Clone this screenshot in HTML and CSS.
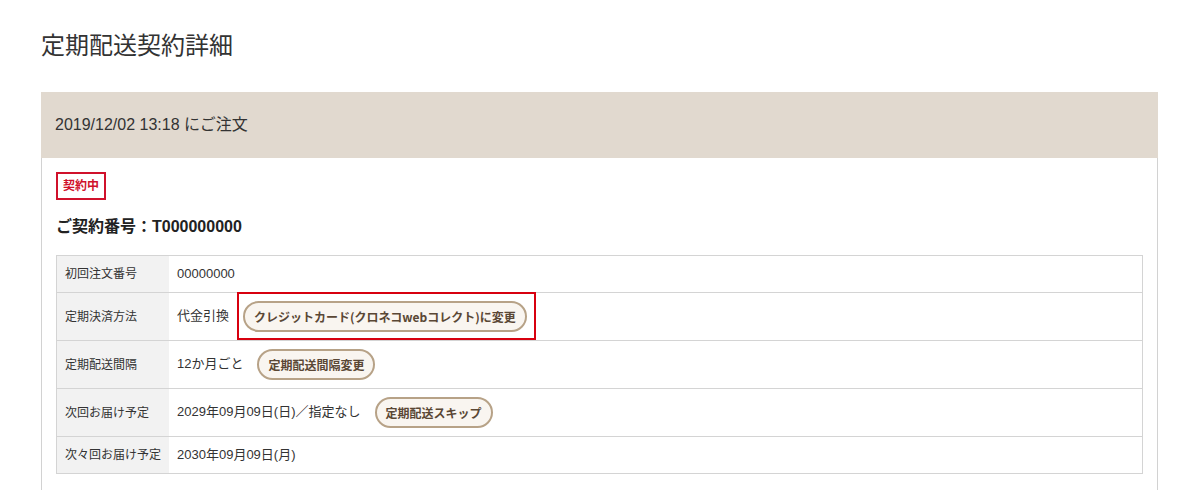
FILE: index.html
```html
<!DOCTYPE html>
<html lang="ja">
<head>
    <meta charset="UTF-8">
    <meta name="viewport" content="width=device-width, initial-scale=1.0">
    <title>定期配送契約詳細</title>
    <link rel="stylesheet" href="styles.css">
</head>
<body>
    <div class="page">
        <h1 class="page-title">定期配送契約詳細</h1>

        <div class="contract">
            <div class="contract-head">2019/12/02 13:18 にご注文</div>
            <div class="contract-body">
                <span class="status">契約中</span>
                <h2 class="contract-no">ご契約番号：T000000000</h2>

                <table class="detail">
                    <tr>
                        <th>初回注文番号</th>
                        <td>00000000</td>
                    </tr>
                    <tr>
                        <th>定期決済方法</th>
                        <td>代金引換<span class="mark"><button class="btn">クレジットカード(クロネコwebコレクト)に変更</button></span></td>
                    </tr>
                    <tr>
                        <th>定期配送間隔</th>
                        <td>12か月ごと<button class="btn">定期配送間隔変更</button></td>
                    </tr>
                    <tr>
                        <th>次回お届け予定</th>
                        <td>2029年09月09日(日)／指定なし<button class="btn">定期配送スキップ</button></td>
                    </tr>
                    <tr>
                        <th>次々回お届け予定</th>
                        <td>2030年09月09日(月)</td>
                    </tr>
                </table>
            </div>
        </div>
    </div>
</body>
</html>
```

FILE: styles.css
```css
body {
    margin: 0;
    background-color: #fff;
    color: #333;
    font-family: "Liberation Sans", "Noto Sans CJK JP", sans-serif;
}
.page {
    padding: 0 42px 0 41px;
}
.page-title {
    margin: 0;
    padding-top: 31px;
    height: 92px;
    box-sizing: border-box;
    font-size: 24px;
    font-weight: 400;
    line-height: 30px;
    color: #333;
}
.contract {
    border: 1px solid #d2d2d2;
    border-top: none;
    height: 420px;
}
.contract-head {
    background-color: #e1d9cf;
    height: 66px;
    line-height: 66px;
    padding-left: 14px;
    margin: 0 -1px;
    font-size: 16px;
    color: #333;
}
.contract-body {
    padding: 14px 14px 0;
}
.status {
    display: inline-block;
    border: 2px solid #d0112b;
    color: #d0112b;
    font-size: 12px;
    font-weight: bold;
    height: 28px;
    line-height: 24px;
    padding: 0 5px;
    box-sizing: border-box;
}
.contract-no {
    margin: 13px 0 14px;
    font-size: 16px;
    font-weight: bold;
    line-height: 28px;
    color: #222;
}
.detail {
    width: 100%;
    border-collapse: collapse;
    border: 1px solid #d4d4d4;
}
.detail th,
.detail td {
    border-top: 1px solid #d4d4d4;
    padding: 8px 8px;
    line-height: 20px;
    text-align: left;
    vertical-align: middle;
}
.detail th {
    width: 96px;
    background-color: #f2f2f2;
    font-size: 12px;
    font-weight: normal;
    color: #333;
}
.detail td {
    font-size: 13px;
    color: #333;
}
.btn {
    height: 31px;
    margin-left: 14px;
    padding: 0 9px;
    border: 2px solid #b7a287;
    border-radius: 16px;
    background-color: #f9f5f0;
    color: #5a4735;
    font-family: "Noto Sans CJK JP", sans-serif;
    font-size: 12px;
    font-weight: bold;
    vertical-align: middle;
    cursor: pointer;
}
.mark {
    position: relative;
    display: inline-block;
    vertical-align: middle;
}
.mark::after {
    content: "";
    position: absolute;
    top: -9px;
    bottom: -8px;
    left: 8px;
    right: -9px;
    border: 2px solid #d7000f;
    pointer-events: none;
}
```
